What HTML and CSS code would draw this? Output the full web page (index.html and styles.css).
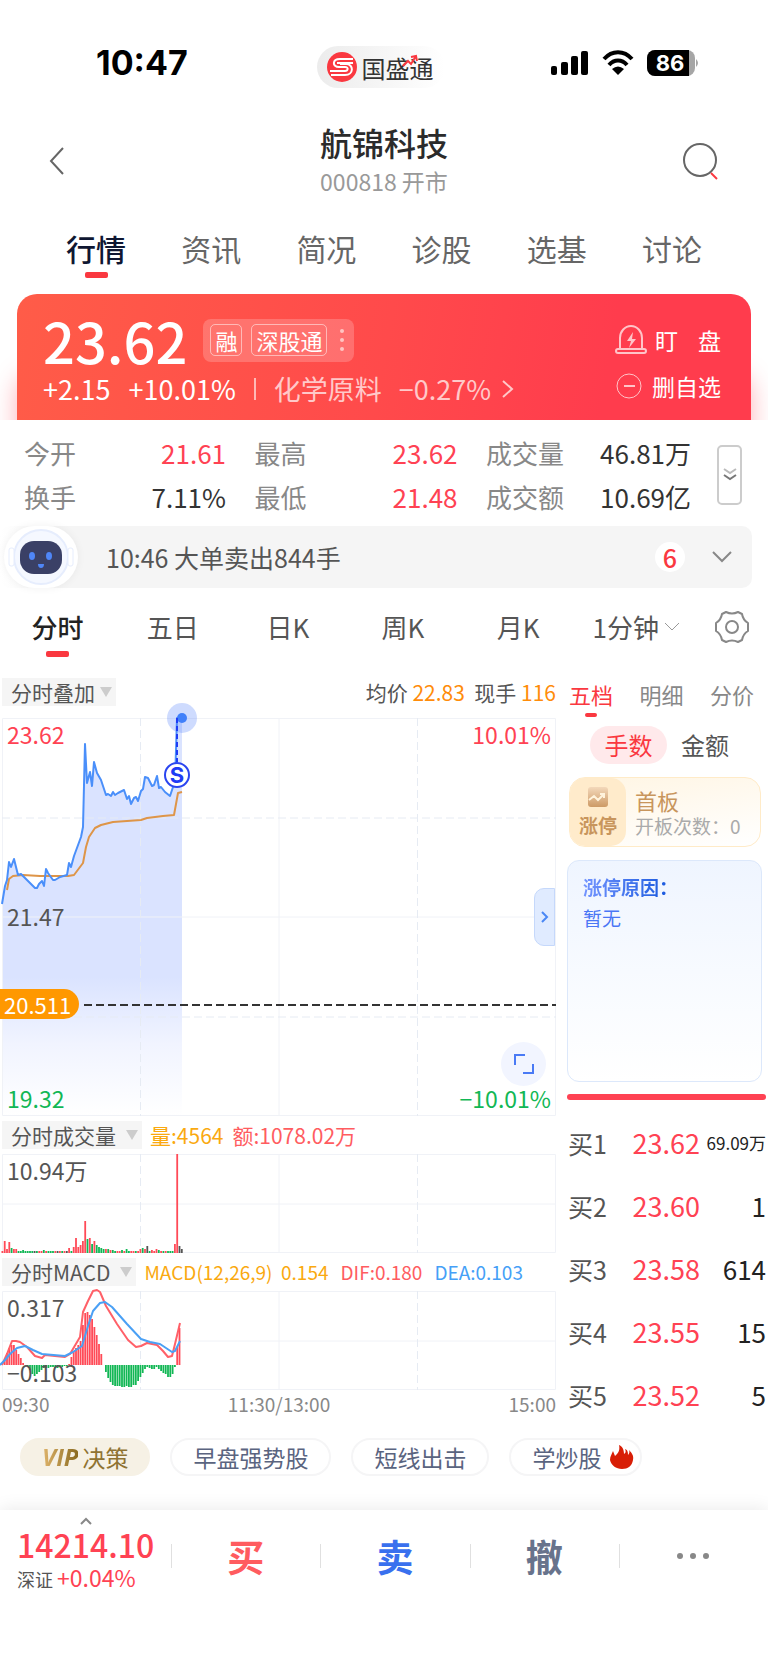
FILE: index.html
```
<!DOCTYPE html>
<html lang="zh-CN">
<head>
    <meta charset="UTF-8">
    <meta name="viewport" content="width=device-width, initial-scale=1.0">
    <title>航锦科技 000818</title>
    <link rel="stylesheet" href="styles.css">
</head>
<body>
    <div class="status-bar">
        <div class="clock">10:47</div>
        <div class="brand">
            <svg width="30" height="30" viewBox="0 0 30 30">
                <circle cx="15" cy="15" r="15" fill="#fa3840"/>
                <path d="M26 7H13c-8 0-8 8-1 8h6c4 0 3 4 0 4H3M4 23h14c9 0 9-11 1-11h-6M10 11h16M4 19h7" fill="none" stroke="#fff" stroke-width="2"/>
            </svg>
            <span>国盛通</span>
            <svg class="brand-arrow" width="16" height="14" viewBox="0 0 16 14"><path d="M1 12l5-5 3 3 5-8M9 3l5-1 1 5" fill="none" stroke="#fa3840" stroke-width="2"/></svg>
        </div>
        <div class="signals">
            <svg width="38" height="26" viewBox="0 0 38 26">
                <rect x="0" y="16" width="6" height="9" rx="2"/><rect x="10" y="12" width="7" height="13" rx="2"/>
                <rect x="20" y="6" width="7" height="19" rx="2"/><rect x="30" y="1" width="7" height="24" rx="2"/>
            </svg>
            <svg width="32" height="26" viewBox="0 0 32 26">
                <path d="M2 9c8-9 20-9 28 0M7 15c5-6 13-6 18 0" fill="none" stroke="#000" stroke-width="4"/>
                <path d="M10 19q6-5 12 0l-6 6z"/>
            </svg>
            <svg width="52" height="26" viewBox="0 0 52 26">
                <rect x="0" y="0" width="48" height="26" rx="8" fill="#a6a6a6"/>
                <path d="M8 0h34v26H8a8 8 0 0 1-8-8V8a8 8 0 0 1 8-8z"/>
                <path d="M49 9q4 4 0 8z" fill="#a6a6a6"/>
                <text x="23" y="21" class="battery-text">86</text>
            </svg>
        </div>
    </div>

    <header class="header">
        <button class="icon-btn" aria-label="返回"><svg width="18" height="30" viewBox="0 0 18 30"><path d="M15 2L3 15l12 13" class="line"/></svg></button>
        <div class="title">
            <h1>航锦科技</h1>
            <p>000818 开市</p>
        </div>
        <button class="icon-btn" aria-label="搜索"><svg width="38" height="42" viewBox="0 0 38 42"><circle cx="18" cy="20" r="16" class="line"/><path d="M29 33l6 6" class="line red-line"/></svg></button>
    </header>

    <nav class="main-tabs">
        <a href="#" class="active">行情</a>
        <a href="#">资讯</a>
        <a href="#">简况</a>
        <a href="#">诊股</a>
        <a href="#">选基</a>
        <a href="#">讨论</a>
    </nav>

    <div class="banner-wrap">
        <section class="banner">
            <div class="quote">
                <div class="quote-top">
                    <strong>23.62</strong>
                    <div class="tags"><span>融</span><span>深股通</span><svg width="4" height="24" viewBox="0 0 4 24"><g fill="#ffc4c2"><circle cx="2" cy="3" r="2"/><circle cx="2" cy="12" r="2"/><circle cx="2" cy="21" r="2"/></g></svg></div>
                </div>
                <div class="quote-change">
                    <span>+2.15</span><span>+10.01%</span><i></i>
                    <a href="#">化学原料<span>−0.27%</span><svg width="12" height="20" viewBox="0 0 12 20"><path d="M1 2l9 8-9 8" fill="none" stroke="currentColor" stroke-width="2"/></svg></a>
                </div>
            </div>
            <div class="actions">
                <button>
                    <svg width="32" height="30" viewBox="0 0 32 30"><path d="M5 24V13a11 12 0 0 1 22 0v11M3 24h26q2 0 2 2t-2 2H3q-2 0-2-2t2-2z" fill="none" stroke="currentColor" stroke-width="2"/><path d="M18 7l-6 9h4l-2 7 7-9h-4z" fill="currentColor"/></svg>
                    <span class="spread"><span>盯</span><span>盘</span></span>
                </button>
                <button>
                    <svg width="28" height="28" viewBox="0 0 28 28"><circle cx="14" cy="14" r="12" fill="none" stroke="currentColor"/><path d="M9 14h11" stroke="currentColor" stroke-width="2"/></svg>
                    <span>删自选</span>
                </button>
            </div>
        </section>
    </div>

    <section class="stats">
        <dl>
            <div><dt>今开</dt><dd class="up">21.61</dd></div>
            <div><dt>最高</dt><dd class="up">23.62</dd></div>
            <div><dt>成交量</dt><dd>46.81万</dd></div>
            <div><dt>换手</dt><dd>7.11%</dd></div>
            <div><dt>最低</dt><dd class="up">21.48</dd></div>
            <div><dt>成交额</dt><dd>10.69亿</dd></div>
        </dl>
        <button class="expand" aria-label="展开"><svg width="18" height="16" viewBox="0 0 18 16"><path d="M3 2l6 4 6-4" fill="none" stroke="#bbb" stroke-width="2"/><path d="M3 8l6 4 6-4" fill="none" stroke="#777" stroke-width="2"/></svg></button>
    </section>

    <section class="alert">
        <div class="robot">
            <svg width="68" height="62" viewBox="0 0 68 62">
                <circle cx="34" cy="31" r="27" fill="#f5f8ff" stroke="#e6edfd" stroke-width="2"/>
                <rect x="2" y="22" width="5" height="18" rx="2" fill="#fff" stroke="#e6edfd"/><rect x="61" y="22" width="5" height="18" rx="2" fill="#fff" stroke="#e6edfd"/>
                <rect x="13" y="15" width="42" height="33" rx="14" fill="#3a4066"/>
                <ellipse cx="25" cy="30" rx="3" ry="4" fill="#4f86f7"/><ellipse cx="42" cy="30" rx="3" ry="4" fill="#4f86f7"/>
                <path d="M31 38h6q0 4-3 4t-3-4z" fill="#4f86f7"/>
            </svg>
        </div>
        <p>10:46 大单卖出844手</p>
        <span class="count">6</span>
        <svg width="20" height="12" viewBox="0 0 20 12"><path d="M1 1l9 9 9-9" fill="none" stroke="#888" stroke-width="2"/></svg>
    </section>

    <nav class="period-tabs">
        <a href="#" class="active">分时</a>
        <a href="#">五日</a>
        <a href="#">日K</a>
        <a href="#">周K</a>
        <a href="#">月K</a>
        <a href="#" class="minute">1分钟<svg width="16" height="10" viewBox="0 0 16 10"><path d="M1 1l7 7 7-7" fill="none" stroke="#999"/></svg></a>
        <button class="icon-btn" aria-label="设置"><svg width="36" height="34" viewBox="0 0 36 34"><path d="M12 2q6 3 12 0l4 2q1 6 6 9v8q-5 3-6 9l-4 2q-6-3-12 0l-4-2q-1-6-6-9v-8q5-3 6-9z" fill="none" stroke="#888" stroke-width="2" stroke-linejoin="round"/><circle cx="18" cy="17" r="6" fill="none" stroke="#888" stroke-width="2"/></svg></button>
    </nav>

    <main class="market">
        <div class="charts">
            <div class="chart-head">
                <button class="picker">分时叠加<i></i></button>
                <p class="now">均价 <b>22.83</b>&nbsp; 现手 <b>116</b></p>
            </div>
            <div class="chart">
                <svg viewBox="0 0 554 398" id="price">
                    <defs><linearGradient id="fade" x1="0" y1="0" x2="0" y2="398" gradientUnits="userSpaceOnUse"><stop offset="0" stop-color="#dae3ff"/><stop offset=".65" stop-color="#dae3ff"/><stop offset=".82" stop-color="#f1f4ff"/><stop offset="1" stop-color="#fff"/></linearGradient></defs>
                    <path id="area" fill="url(#fade)"/>
                    <path d="M.5 .5h553v397H.5zM0 199h554M277 0v398" class="grid"/>
                    <path d="M0 100h554M0 299h554M138.500 0v398M415.500 0v398" class="grid dashed"/>
                    <polyline class="avg" points="5,172 7,161 11,158 21,157 38,158 66,158 72,157 75,153 81,145 84,129 87,119 93,110 99,107 111,104 139,102 145,100 161,98 172,97 174,86 176,75 180,74"/>
                    <polyline id="trend" class="trend" points="0,186 3,168 5,162 7,144 9,149 12,141 14,149 16,157 19,156 21,158 26,163 30,167 33,170 35,170 37,166 40,163 42,168 44,151 46,155 51,162 53,162 58,159 65,157 67,145 69,149 72,138 79,119 81,109 83,26 85,65 88,54 90,68 92,44 95,55 99,62 104,77 106,76 109,78 111,74 113,77 116,75 122,72 125,81 127,78 129,86 132,80 134,79 136,83 139,73 141,71 143,59 146,60 150,68 152,67 155,58 157,70 159,69 163,74 168,78 171,69 173,65 175,0 180,0"/>
                    <circle cx="180" cy="0" r="15" fill="#4f7dfa" opacity=".28"/>
                    <circle cx="180" cy="0" r="5" fill="#4080fa"/>
                    <path d="M175 0v44" stroke="#1f3cf5" stroke-width="2" stroke-dasharray="5 3"/>
                    <circle cx="175" cy="57" r="12" fill="#fff" stroke="#2a45f0" stroke-width="2"/>
                    <text x="175" y="65" class="sell-mark">S</text>
                    <path d="M82 287h472" stroke="#333" stroke-width="2" stroke-dasharray="8 4"/>
                </svg>
                <span class="label top-left up">23.62</span>
                <span class="label top-right up">10.01%</span>
                <span class="label mid-left">21.47</span>
                <span class="label bottom-left down">19.32</span>
                <span class="label bottom-right down">−10.01%</span>
                <span class="price-tag">20.511</span>
                <button class="drawer" aria-label="收起"><svg width="8" height="12" viewBox="0 0 8 12"><path d="M1 1l5 5-5 5" fill="none" stroke="#4a87f5" stroke-width="2"/></svg></button>
                <button class="fullscreen" aria-label="全屏"><svg width="22" height="22" viewBox="0 0 22 22"><path d="M2 12V2h10M20 11v9H10" fill="none" stroke="#4a7af5" stroke-width="2"/></svg></button>
            </div>

            <div class="chart-head sub-head">
                <button class="picker wide">分时成交量<i></i></button>
                <p><span class="c-orange">量:4564</span><span class="c-red">额:1078.02万</span></p>
            </div>
            <div class="chart">
                <svg viewBox="0 0 554 99">
                    <path d="M.5 .5h553v98H.5zM0 50h554M277 0v99" class="grid"/>
                    <path d="M138.500 0v99M415.500 0v99" class="grid dashed"/>
                    <g id="volume"></g>
                </svg>
                <span class="label top-left">10.94万</span>
            </div>

            <div class="chart-head sub-head">
                <button class="picker wide">分时MACD<i></i></button>
                <p class="macd-text"><span class="c-orange">MACD(12,26,9)&nbsp; 0.154</span><span class="c-red">DIF:0.180</span><span class="c-blue">DEA:0.103</span></p>
            </div>
            <div class="chart">
                <svg viewBox="0 0 554 99">
                    <path d="M.5 .5h553v98H.5zM0 50h554M277 0v99" class="grid"/>
                    <path d="M138.500 0v99M415.500 0v99" class="grid dashed"/>
                    <g id="macd"></g>
                    <polyline class="dif" points="0,74 5,63 10,50 14,50 18,51 25,56 33,65 40,67 43,64 63,66 68,63 78,46 81,21 86,10 91,0 95,-1 98,1 104,15 115,33 126,49 134,56 139,55 145,52 155,54 161,60 166,66 170,65 173,53 178,32"/>
                    <polyline class="dea" points="-2,74 3,69 8,63 15,57 23,55 31,59 40,63 63,65 71,61 80,55 86,35 91,20 98,12 103,11 110,16 125,33 139,48 148,51 158,53 170,61 173,60 178,50"/>
                </svg>
                <span class="label top-left">0.317</span>
                <span class="label bottom-left">−0.103</span>
            </div>
            <div class="times"><span>09:30</span><span>11:30/13:00</span><span>15:00</span></div>
        </div>

        <aside class="book">
            <nav class="book-tabs">
                <a href="#" class="active">五档</a>
                <a href="#">明细</a>
                <a href="#">分价</a>
            </nav>
            <div class="units">
                <button class="active">手数</button>
                <button>金额</button>
            </div>
            <div class="limit">
                <div class="limit-badge">
                    <svg width="20" height="20" viewBox="0 0 20 20"><defs><linearGradient id="gold" x2="0" y2="1"><stop stop-color="#f3d8ba"/><stop offset="1" stop-color="#cd9a66"/></linearGradient></defs><rect width="20" height="20" rx="3" fill="url(#gold)"/><path d="M1 13l5-4 4 4 6-6M12 7h4v4" fill="none" stroke="#fff3dc" stroke-width="2"/></svg>
                    <b>涨停</b>
                </div>
                <div class="limit-info">
                    <h3>首板</h3>
                    <p>开板次数：0</p>
                </div>
            </div>
            <div class="reason">
                <h3>涨停原因：</h3>
                <p>暂无</p>
            </div>
            <div class="ratio"></div>
            <table class="bids">
                <tr><th scope="row">买1</th><td class="price">23.62</td><td class="small">69.09万</td></tr>
                <tr><th scope="row">买2</th><td class="price">23.60</td><td>1</td></tr>
                <tr><th scope="row">买3</th><td class="price">23.58</td><td>614</td></tr>
                <tr><th scope="row">买4</th><td class="price">23.55</td><td>15</td></tr>
                <tr><th scope="row">买5</th><td class="price">23.52</td><td>5</td></tr>
            </table>
        </aside>
    </main>

    <div class="chips">
        <a href="#" class="vip"><b>VIP</b> 决策</a>
        <a href="#">早盘强势股</a>
        <a href="#">短线出击</a>
        <a href="#" class="hot">学炒股<svg width="24" height="24" viewBox="0 0 24 24"><path d="M9 0c3 1 5 4 5 9 2-1 2-3 1-5 3 1 3 4 3 6 1-1 2-3 1-5 3 3 5 6 4 10-1 6-5 9-11 9S1 20 0 15c0-4 2-6 3-9l2 5c4-3 5-7 4-11z" fill="#d81e06"/></svg></a>
    </div>

    <footer class="trade-bar">
        <div class="index">
            <svg width="12" height="8" viewBox="0 0 12 8"><path d="M1 7l5-5 5 5" fill="none" stroke="#888" stroke-width="2"/></svg>
            <strong>14214.10</strong>
            <p>深证 <span>+0.04%</span></p>
        </div>
        <button class="buy">买</button>
        <button class="sell">卖</button>
        <button class="cancel">撤</button>
        <button class="more" aria-label="更多"><svg width="34" height="8" viewBox="0 0 34 8"><g fill="#888"><circle cx="4" cy="4" r="3"/><circle cx="17" cy="4" r="3"/><circle cx="30" cy="4" r="3"/></g></svg></button>
    </footer>

    <script>
        const RED = '#ff4a57', GREEN = '#12b755', GREY = '#555';
        const step = 2.3;

        // r = up, g = down, k = flat
        const volume = '2r 12r 4r 11r 5g 4r 4r 2g 2g 3g 2g 2g 2g 2g 2k 2g 2r 2r 3g 2r 2g 2g 2g 2r 2k 2r 2g 2r 2k 5r 2g 6r 15r 6r 8r 12r 32r 14g 15r 9g 12r 8g 6g 5g 4g 4r 4g 3r 3g 2g 2r 2r 3g 2r 4g 2g 2r 2r 2g 2r 4r 5g 4r 7k 2g 3r 2r 4r 3g 2r 2g 2r 2g 2g 2g 9r 99r 7k 4k';
        const macd = [0,5,12,17,20,20,15,11,7,2,0,-1,-5,-9,-11,-9,-7,-5,-3,-3,-3,-2,-2,-3,-3,-2,-2,-1,-1,1,8,13,17,20,24,40,52,53,50,46,38,30,21,11,0,-7,-13,-17,-20,-21,-21,-21,-22,-22,-21,-22,-22,-20,-20,-16,-12,-8,-4,-2,-3,-4,-4,-2,-4,-6,-8,-9,-12,-12,-9,-2,18,37];

        function bar(i, y, h, color) {
            return `<rect x="${(i * step - 0.5).toFixed(1)}" y="${y}" width="1.8" height="${h}" fill="${color}"/>`;
        }

        document.getElementById('volume').innerHTML = volume.split(' ').map((v, i) => {
            const h = parseInt(v);
            const color = { r: RED, g: GREEN, k: GREY }[v.slice(-1)];
            return bar(i, 99 - h, h, color);
        }).join('');

        document.getElementById('macd').innerHTML = macd.map((h, i) =>
            h >= 0 ? bar(i, 74 - h, h, RED) : bar(i, 74, -h, GREEN)
        ).join('');

        // fill under the price line
        const points = document.getElementById('trend').getAttribute('points');
        document.getElementById('area').setAttribute('d', 'M' + points.replaceAll(' ', 'L') + 'V398H0Z');
    </script>
</body>
</html>
```
FILE: styles.css
```
* {
    box-sizing: border-box;
}

body {
    margin: 0;
    background-color: #fff;
    color: #333;
    font-family: "Noto Sans CJK SC", sans-serif;
    font-size: 26px;
    overflow-x: hidden;
}

h1, h3, p, dl, dd {
    margin: 0;
    font-weight: normal;
}

a {
    color: inherit;
    text-decoration: none;
}

button {
    padding: 0;
    border: none;
    background: none;
    color: inherit;
    font: inherit;
    white-space: nowrap;
    cursor: pointer;
}

svg {
    display: block;
    flex-shrink: 0;
}

.icon-btn {
    display: flex;
}

.line {
    fill: none;
    stroke: #666;
    stroke-width: 2;
}

.red-line {
    stroke: #fa3840;
}

.up {
    color: #ff4253;
}

.down {
    color: #12b755;
}

/* status bar */
.status-bar {
    display: grid;
    grid-template-columns: 1fr auto 1fr;
    align-items: center;
    padding: 46px 69px 0 96px;
}

.clock {
    font: bold 34px/36px Inter, sans-serif;
    color: #000;
    margin-top: -8px;
}

.brand {
    display: flex;
    align-items: center;
    gap: 5px;
    width: 128px;
    height: 42px;
    padding-left: 10px;
    margin-right: 34px;
    border-radius: 21px;
    background: linear-gradient(90deg, #ececec, #fff);
    font-size: 24px;
    position: relative;
}

.brand-arrow {
    position: absolute;
    right: 27px;
    top: 8px;
}

.signals {
    display: flex;
    justify-content: flex-end;
    gap: 13px;
    margin-top: -8px;
}

.battery-text {
    font: bold 22px Inter, sans-serif;
    fill: #fff;
    text-anchor: middle;
}

/* header */
.header {
    display: flex;
    justify-content: space-between;
    align-items: center;
    margin-top: 34px;
    padding: 0 48px;
}

.header .icon-btn {
    width: 38px;
}

.title {
    text-align: center;
}

.title h1 {
    font-size: 32px;
    line-height: 40px;
    font-weight: 500;
    color: #2b2b2b;
}

.title p {
    font-size: 23px;
    line-height: 38px;
    color: #999;
}

.main-tabs {
    display: flex;
    justify-content: space-between;
    margin-top: 28px;
    padding: 0 66px;
    font-size: 30px;
    line-height: 40px;
    color: #666;
}

.main-tabs .active, .period-tabs .active {
    font-weight: 500;
    color: #0f1732;
}

.main-tabs a, .period-tabs a {
    height: 50px;
}

.main-tabs .active::after, .period-tabs .active::after {
    content: "";
    display: block;
    width: 23px;
    height: 6px;
    margin: 4px auto 0;
    border-radius: 2px;
    background: #fa3840;
}

/* red quote banner */
.banner-wrap {
    margin-top: 16px;
    padding: 0 17px;
    overflow: hidden;
}

.banner {
    display: flex;
    justify-content: space-between;
    height: 126px;
    padding: 22px 30px 0 26px;
    border-radius: 20px 20px 0 0;
    background: linear-gradient(100deg, #ff5c48, #ff4a4b 50%, #ff3c4d 80%);
    box-shadow: 0 80px 24px rgba(255, 60, 77, 0.4);
    color: #fff;
}

.quote-top {
    display: flex;
    align-items: center;
    gap: 16px;
    height: 48px;
}

.quote-top strong {
    font-size: 56px;
    font-weight: 500;
    line-height: 48px;
}

.tags {
    display: flex;
    align-items: center;
    gap: 9px;
    height: 43px;
    padding: 0 10px 0 7px;
    border-radius: 8px;
    background: rgba(255, 255, 255, 0.2);
    font-size: 22px;
}

.tags span {
    padding: 0 4px;
    line-height: 30px;
    border: 1px solid rgba(255, 255, 255, 0.5);
    border-radius: 5px;
}

.tags svg {
    margin-left: 4px;
}

.quote-change {
    display: flex;
    align-items: center;
    gap: 18px;
    height: 30px;
    margin-top: 10px;
    font-size: 27px;
    line-height: 30px;
}

.quote-change i {
    width: 2px;
    height: 22px;
    background: rgba(255, 255, 255, 0.6);
}

.quote-change a {
    display: flex;
    align-items: center;
    gap: 11px;
    color: #ffc9c9;
}

.quote-change a span {
    padding-left: 6px;
}

.actions {
    display: flex;
    flex-direction: column;
    gap: 16px;
    padding-top: 9px;
    font-size: 23px;
    line-height: 30px;
}

.actions button {
    display: flex;
    align-items: center;
    justify-content: space-between;
    gap: 8px;
    width: 106px;
}

.actions svg {
    color: #ffc4c8;
}

.spread {
    display: flex;
    flex: 1;
    justify-content: space-between;
}

/* day statistics */
.stats {
    display: flex;
    align-items: center;
    justify-content: space-between;
    padding: 11px 26px 7px 24px;
}

.stats dl {
    display: grid;
    grid-template-columns: 202px 203px 205px;
    justify-content: space-between;
    flex: 1;
    margin-right: 26px;
    line-height: 44px;
}

.stats dl div {
    display: flex;
    justify-content: space-between;
}

.stats dt {
    color: #888;
}

.expand {
    display: flex;
    justify-content: center;
    align-items: center;
    width: 25px;
    height: 60px;
    border: 2px solid #ccc;
    border-radius: 5px;
}

/* big order alert */
.alert {
    display: flex;
    align-items: center;
    height: 62px;
    margin-right: 16px;
    padding: 0 20px 0 4px;
    border-radius: 10px;
    background: linear-gradient(90deg, #fff, #f5f5f5 60px);
    font-size: 25px;
    color: #555;
}

.robot {
    padding: 0 3px;
    border-radius: 37px;
    background: #fff;
    box-shadow: 0 0 8px rgba(0, 0, 0, 0.06);
}

.alert p {
    flex: 1;
    margin-left: 28px;
}

.count {
    width: 30px;
    line-height: 30px;
    margin-right: 27px;
    border-radius: 15px;
    background: #fff;
    color: #fa3840;
    font-weight: 500;
    text-align: center;
}

.period-tabs {
    display: grid;
    grid-template-columns: repeat(5, 115fr) 121fr 71fr;
    justify-items: center;
    margin-top: 19px;
    line-height: 40px;
    color: #555;
}

.period-tabs .active {
    color: #222;
}

.period-tabs .icon-btn {
    height: 40px;
    align-items: center;
}

.minute {
    display: flex;
    gap: 5px;
}

.minute svg {
    margin-top: 15px;
}

/* charts and order book */
.market {
    display: flex;
    gap: 11px;
    margin-top: 21px;
    padding: 0 2px;
}

.charts {
    flex: 1;
    min-width: 0;
}

.chart-head {
    display: flex;
    justify-content: space-between;
    align-items: center;
    height: 28px;
    margin-bottom: 12px;
    font-size: 21px;
    line-height: 28px;
    color: #555;
}

.sub-head {
    justify-content: flex-start;
    gap: 8px;
    margin: 5px 0;
}

.sub-head p {
    display: flex;
    gap: 9px;
    white-space: nowrap;
}

.sub-head .macd-text {
    gap: 12px;
    font-size: 19px;
}

.picker {
    display: flex;
    align-items: center;
    gap: 5px;
    padding: 0 4px 0 9px;
    background: #f5f5f5;
}

.picker.wide {
    gap: 10px;
}

.picker i {
    border: 6px solid transparent;
    border-top: 10px solid #ccc;
    border-bottom: 0;
}

.now b {
    font-weight: normal;
    color: #ff8c0a;
}

.c-orange {
    color: #faa90f;
}

.c-red {
    color: #ff5c60;
}

.c-blue {
    color: #45a0f7;
}

.chart {
    position: relative;
}

.chart > svg {
    width: 100%;
    height: auto;
    overflow: visible;
}

.grid {
    fill: none;
    stroke: #f0f2f7;
    stroke-width: 1;
}

.dashed {
    stroke: #e6ebf3;
    stroke-dasharray: 8 4;
}

.avg, .trend, .dif, .dea {
    fill: none;
    stroke: #de9548;
    stroke-width: 2;
    stroke-linejoin: round;
}

.trend {
    stroke: #4a8ffa;
}

.dif {
    stroke: #ff6068;
}

.dea {
    stroke: #4aa0f5;
}

.sell-mark {
    font: bold 22px Inter, sans-serif;
    fill: #1f3cf5;
    text-anchor: middle;
}

.label {
    position: absolute;
    font-size: 23px;
    line-height: 30px;
}

.label:not(.up):not(.down) {
    color: #555;
}

.top-left {
    top: 1px;
    left: 5px;
}

.top-right {
    top: 1px;
    right: 5px;
}

.mid-left {
    top: calc(50% - 16px);
    left: 5px;
}

.bottom-left {
    bottom: 3px;
    left: 5px;
}

.bottom-right {
    bottom: 3px;
    right: 5px;
}

.price-tag {
    position: absolute;
    top: 68%;
    left: -2px;
    padding: 0 8px 0 4px;
    border-radius: 0 15px 15px 0;
    background: #ff9800;
    color: #fff;
    font-size: 22px;
    line-height: 30px;
}

.drawer {
    position: absolute;
    top: calc(50% - 29px);
    right: 1px;
    display: flex;
    align-items: center;
    justify-content: center;
    width: 21px;
    height: 58px;
    border: 1px solid #c5d8fb;
    border-radius: 10px 0 0 10px;
    background: #e0ebff;
}

.fullscreen {
    position: absolute;
    right: 10px;
    bottom: 30px;
    display: flex;
    align-items: center;
    justify-content: center;
    width: 45px;
    height: 44px;
    border-radius: 50%;
    background: #f2f5ff;
}

.times {
    display: flex;
    justify-content: space-between;
    font-size: 19px;
    line-height: 28px;
    color: #888;
}

.book {
    width: 199px;
}

.book-tabs {
    display: flex;
    justify-content: space-between;
    padding: 0 12px 0 2px;
    font-size: 22px;
    line-height: 32px;
    color: #888;
}

.book-tabs a {
    height: 48px;
}

.book-tabs .active {
    color: #fa3840;
}

.book-tabs .active::after {
    content: "";
    display: block;
    width: 12px;
    height: 4px;
    margin: 3px auto 0;
    border-radius: 2px;
    background: #fa3840;
}

.units {
    display: flex;
    gap: 14px;
    padding-left: 23px;
    font-size: 24px;
    line-height: 38px;
    color: #555;
}

.units .active {
    width: 77px;
    border-radius: 19px;
    background: #ffe9eb;
    color: #fa3840;
}

.limit {
    display: flex;
    height: 70px;
    margin: 13px 5px 13px 2px;
    border: 1px solid #ffebc8;
    border-radius: 16px;
    background: linear-gradient(170deg, #fff5e3, #fff);
}

.limit-badge {
    display: flex;
    flex-direction: column;
    align-items: center;
    justify-content: center;
    width: 56px;
    border-radius: 15px;
    background: #ffebcb;
    color: #c8955c;
    font-size: 19px;
    line-height: 24px;
    gap: 6px;
}

.limit-badge b {
    font-weight: bold;
}

.limit-info {
    padding: 6px 0 0 9px;
    white-space: nowrap;
}

.limit-info h3 {
    font-size: 22px;
    line-height: 32px;
    color: #c8955c;
}

.limit-info p {
    font-size: 19px;
    line-height: 20px;
    color: #aaa;
}

.reason {
    height: 222px;
    margin-right: 4px;
    padding: 10px 15px;
    border: 1px solid #dce8fb;
    border-radius: 12px;
    background: linear-gradient(#eff5ff, #fff);
    font-size: 19px;
    line-height: 31px;
    color: #4a76f5;
}

.reason h3 {
    font-size: 19px;
    font-weight: bold;
    background: linear-gradient(90deg, #7495ff, #1f5de0 80px);
    background-clip: text;
    color: transparent;
}

.ratio {
    height: 6px;
    margin: 12px 0 11px;
    border-radius: 3px;
    background: #ff4253;
}

.bids {
    width: 100%;
    table-layout: fixed;
    border-collapse: collapse;
    white-space: nowrap;
}

.bids th, .bids td {
    height: 63px;
    padding: 0;
    font-weight: normal;
    text-align: right;
    color: #222;
}

.bids th {
    width: 46px;
    font-size: 25px;
    padding-left: 1px;
    color: #555;
    text-align: left;
}

.bids .price {
    width: 87px;
    font-size: 27px;
    color: #ff4253;
}

.bids .small {
    font-size: 17px;
}

/* shortcuts */
.chips {
    display: flex;
    gap: 20px;
    margin-top: 12px;
    padding: 0 20px;
    font-size: 23px;
    line-height: 34px;
    color: #5a6480;
}

.chips a {
    display: flex;
    gap: 9px;
    align-items: center;
    padding: 0 21px;
    border: 2px solid #f5f5f6;
    border-radius: 19px;
}

.chips .vip {
    gap: 4px;
    padding: 0 20px;
    border-color: #f6f1e5;
    background: #f6f1e5;
    color: #8f7332;
}

.vip b {
    font: italic bold 24px/34px "Open Sans", sans-serif;
    background: linear-gradient(90deg, #e0b56c, #8a6a20);
    background-clip: text;
    color: transparent;
}

.chips .hot {
    padding-right: 6px;
}

/* bottom bar */
.trade-bar {
    display: grid;
    grid-template-columns: 171px 1fr 1fr 1fr 1fr;
    margin-top: 34px;
    height: 159px;
    box-shadow: 0 -2px 16px rgba(0, 0, 0, 0.08);
}

.index {
    padding: 7px 0 0 17px;
    color: #ff4253;
}

.index svg {
    margin-left: 63px;
}

.index strong {
    display: block;
    font-size: 32px;
    line-height: 38px;
    font-weight: 500;
}

.index p {
    font-size: 18px;
    line-height: 28px;
    color: #555;
}

.index span {
    font-size: 23px;
    color: #ff4253;
}

.trade-bar button {
    display: flex;
    align-items: center;
    justify-content: center;
    height: 92px;
    font-size: 37px;
    font-weight: bold;
    background: linear-gradient(#e0e0e0, #e0e0e0) left center / 1px 24px no-repeat;
}

.trade-bar .buy {
    color: #ff5c5f;
}

.trade-bar .sell {
    color: #3970ee;
}

.trade-bar .cancel {
    color: #68738c;
}
```
